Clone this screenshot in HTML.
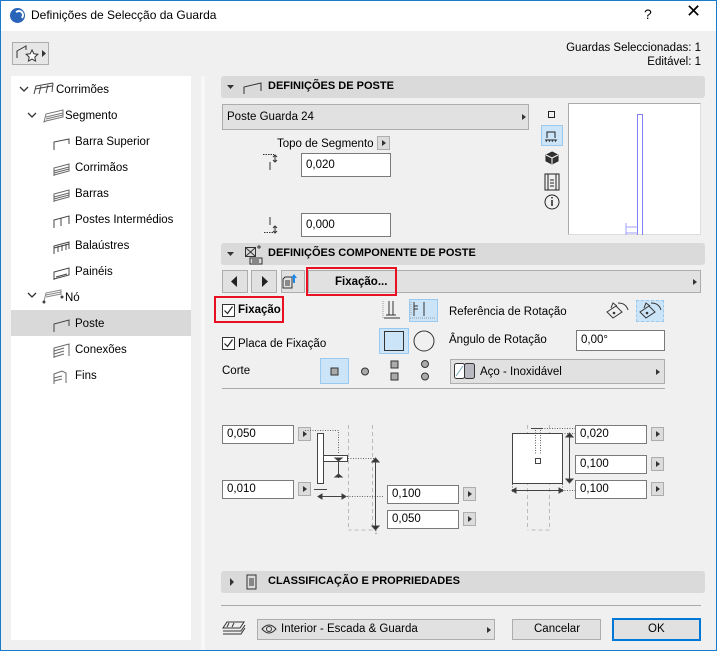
<!DOCTYPE html>
<html><head><meta charset="utf-8">
<style>
*{box-sizing:border-box;margin:0;padding:0}
body{width:717px;height:651px;overflow:hidden;background:#f0f0f0;font-family:"Liberation Sans",sans-serif;font-size:11.5px;color:#000;position:relative}
.a{position:absolute}
.t{position:absolute;white-space:nowrap;line-height:14px}
.hdr{position:absolute;left:221px;width:484px;height:22px;background:#dadada;border-radius:3px}
.hdr b{position:absolute;left:47px;top:4px;font-size:11px;white-space:nowrap}
.inp{position:absolute;background:#fff;border:1px solid #7a7a7a;padding-left:4px;line-height:17px;font-size:11.5px}
.btn{position:absolute;background:#e1e1e1;border:1px solid #adadad}
.sb{position:absolute;width:13px;height:14px;background:#dcdcdc;border:1px solid #adadad}
.sb:after,.arr:after{content:"";position:absolute;left:4px;top:3px;border-left:4px solid #333;border-top:3.5px solid transparent;border-bottom:3.5px solid transparent}
.arr{position:absolute;width:10px;height:12px}
.sel{position:absolute;background:#cce4f7;border:1px solid #99c9ef}
.cb{position:absolute;width:13px;height:13px;border:1px solid #333;background:#fff}
.red{position:absolute;border:2px solid #e81123}
</style></head><body>
<div class="a" style="left:0;top:0;width:717px;height:31px;background:#fff"></div>
<div class="a" style="left:10px;top:8px;width:15px;height:15px;border-radius:50%;background:#2a64b8"></div>
<div class="a" style="left:14px;top:10px;width:10px;height:10px;border-radius:50%;border:2px solid #fff;border-left-color:transparent;border-bottom-color:transparent"></div>
<div class="t" style="left:31px;top:8px;font-size:12px">Definições de Selecção da Guarda</div>
<div class="t" style="left:644px;top:7px;font-size:14px">?</div>
<div class="t" style="left:686px;top:4px;font-size:18px;font-weight:300">✕</div>
<div class="a" style="left:0;top:0;width:1px;height:651px;background:#1979ca"></div>
<div class="a" style="left:716px;top:0;width:1px;height:651px;background:#1979ca"></div>
<div class="a" style="left:0;top:650px;width:717px;height:1px;background:#1979ca"></div>
<div class="a" style="left:0;top:0;width:717px;height:1px;background:#1979ca"></div>

<div class="btn" style="left:12px;top:42px;width:37px;height:23px;background:#e6e6e6"></div>
<svg class="a" style="left:12px;top:42px" width="37" height="23"><path d="M5 16V9L14 4V8" fill="none" stroke="#333"/><path d="M20 8l1.8 3.8 4 .5-3 2.8.8 4-3.6-2-3.6 2 .8-4-3-2.8 4-.5z" fill="#fff" stroke="#333"/><path d="M30 8l4 3.5-4 3.5z" fill="#333"/></svg>

<div class="t" style="right:16px;top:41px">Guardas Seleccionadas: 1</div>
<div class="t" style="right:16px;top:55px">Editável: 1</div>

<div class="a" style="left:11px;top:76px;width:180px;height:564px;background:#fff"></div>
<div class="a" style="left:201px;top:76px;width:4px;height:574px;background:#f7f7f7"></div>
<div class="a" style="left:11px;top:310px;width:180px;height:26px;background:#d9d9d9"></div>
<svg class="a" style="left:11px;top:76px" width="180" height="320" fill="none" stroke="#444">
<path d="M9 11l4 4 4-4M17 37l4 4 4-4M17 217l4 4 4-4" stroke="#333" stroke-width="1.3"/>
<path d="M23 18l2-8 17-3M28 18l2-8M35 17l2-8M41 16l1-9M24 13l17-3"/>
<path d="M33 46l2-8 17-4v7l-17 4zM35 41l17-4M35 43l17-4" stroke="#777"/>
<path d="M43 74v-8l15-3v5" /><path d="M43 100v-8l15-4v7l-15 4zM43 97l15-4M43 95l15-4" stroke="#666"/>
<path d="M43 126v-8l15-4v7l-15 4zM43 123l15-4M43 121l15-4" stroke="#666"/>
<path d="M43 152v-8l15-4v8M50 150v-8"/>
<path d="M43 178v-8l15-4v7M43 172l15-4M47 176v-6M51 175v-6M55 174v-6"/>
<path d="M43 204v-8l15-4v7l-15 4zM45 201l11-3"/>
<path d="M33 225l2-8 15-3v5M35 221l15-3M35 219l15-3" stroke="#888"/><circle cx="33" cy="226" r="1" fill="#333"/><circle cx="51" cy="221" r="1" fill="#333"/>
<path d="M43 256v-8l15-4v6"/>
<path d="M43 282v-10l15-4v12M43 275l10-3M43 278l10-3M43 281l10-3" stroke="#666"/>
<path d="M43 308v-10l8-3 4 2v10M43 302l8-2M43 305l8-2" stroke="#666"/>
</svg>
<div class="t" style="left:56px;top:83px">Corrimões</div>
<div class="t" style="left:65px;top:109px">Segmento</div>
<div class="t" style="left:75px;top:135px">Barra Superior</div>
<div class="t" style="left:75px;top:161px">Corrimãos</div>
<div class="t" style="left:75px;top:187px">Barras</div>
<div class="t" style="left:75px;top:213px">Postes Intermédios</div>
<div class="t" style="left:75px;top:239px">Balaústres</div>
<div class="t" style="left:75px;top:265px">Painéis</div>
<div class="t" style="left:65px;top:291px">Nó</div>
<div class="t" style="left:75px;top:317px">Poste</div>
<div class="t" style="left:75px;top:343px">Conexões</div>
<div class="t" style="left:75px;top:369px">Fins</div>

<div class="hdr" style="top:76px"><b style="left:47px">DEFINIÇÕES DE POSTE</b></div>
<svg class="a" style="left:221px;top:76px" width="45" height="22" fill="none" stroke="#333"><path d="M6 9h7l-3.5 4z" fill="#333" stroke="none"/><path d="M23 18v-7l17-4v8"/></svg>
<div class="btn" style="left:222px;top:104px;width:307px;height:26px"></div>
<div class="t" style="left:227px;top:110px">Poste Guarda 24</div>
<div class="arr" style="left:518px;top:111px"></div>
<div class="sel" style="left:541px;top:125px;width:22px;height:21px"></div>
<svg class="a" style="left:540px;top:104px" width="25" height="110" fill="none" stroke="#222">
<rect x="8.5" y="7.5" width="6" height="6"/>
<path d="M7 34v-6h8v6M5 36h12" /><path d="M6 38l1-2M9 38l1-2M12 38l1-2M15 38l1-2" stroke-width=".8"/>
<path d="M12 48l6 3v6l-6 3-6-3v-6z" fill="#333"/><path d="M6 51l6 3 6-3M12 54v6" stroke="#fff"/>
<path d="M5 70h14v16H5zM8 70v16M16 70v16M10 76h4M10 79h4M10 82h4"/>
<circle cx="12" cy="98" r="7"/><path d="M12 96v6M12 93v1.5" stroke-width="1.5"/>
</svg>
<div class="a" style="left:568px;top:103px;width:133px;height:132px;background:#fff;border:1px solid #aaa;border-right-color:#ddd;border-bottom-color:#ddd"></div>
<svg class="a" style="left:568px;top:103px" width="133" height="132" fill="none" stroke="#8080ff"><rect x="69.5" y="11.5" width="5" height="124"/><path d="M58 120v12M58 124h12M58 130h12" stroke="#a0a0ff"/></svg>
<div class="t" style="left:277px;top:137px">Topo de Segmento</div>
<div class="sb" style="left:377px;top:136px"></div>
<svg class="a" style="left:262px;top:152px" width="20" height="90" fill="none" stroke="#333"><path d="M1 2.5h11" stroke-dasharray="1.5 1"/><path d="M8 10v8M13 3v7M11 5l2-2 2 2M11 8l2 2 2-2"/><path d="M8 65v8M1 80.5h11" /><path d="M1 80.5h11" stroke="#fff" stroke-dasharray="1 1.5"/><path d="M13 74v7M11 76l2-2 2 2M11 79l2 2 2-2"/></svg>
<div class="inp" style="left:301px;top:153px;width:90px;height:24px;line-height:22px">0,020</div>
<div class="inp" style="left:301px;top:213px;width:90px;height:24px;line-height:22px">0,000</div>

<div class="hdr" style="top:243px"><b>DEFINIÇÕES COMPONENTE DE POSTE</b></div>
<svg class="a" style="left:221px;top:243px" width="45" height="22" fill="none" stroke="#333"><path d="M6 9h7l-3.5 4z" fill="#333" stroke="none"/><rect x="24.5" y="4.5" width="10" height="9"/><path d="M25 5l9 8M34 5l-9 8M29 15h12v6H29zM31 17h7M31 19h7M36 4h4M38 2v4"/></svg>
<div class="btn" style="left:222px;top:270px;width:26px;height:23px"></div>
<div class="btn" style="left:251px;top:270px;width:26px;height:23px"></div>
<div class="btn" style="left:281px;top:270px;width:24px;height:23px"></div>
<div class="btn" style="left:308px;top:270px;width:393px;height:23px"></div>
<svg class="a" style="left:222px;top:270px" width="90" height="23" fill="#222"><path d="M15 6v11l-6-5.5z"/><path d="M40 6v11l6-5.5z"/><path d="M63 7h7v11h-9V9z" fill="none" stroke="#333"/><path d="M63 11h5M63 13h5M63 15h5" stroke="#333"/><path d="M72 4l-3 4h2v5h2V8h2z" fill="#1e88e5"/><path d="M99 6v4h3M99 8h3M104 5v13" fill="none" stroke="#444"/></svg>
<div class="t" style="left:335px;top:275px;font-weight:bold">Fixação...</div>
<div class="arr" style="left:689px;top:276px"></div>
<div class="red" style="left:306px;top:267px;width:91px;height:29px"></div>

<div class="cb" style="left:222px;top:304px"></div>
<svg class="a" style="left:222px;top:304px" width="13" height="13"><path d="M2.5 6.5l3 3 5-7" fill="none" stroke="#222" stroke-width="1.2"/></svg>
<div class="t" style="left:238px;top:303px;font-weight:bold">Fixação</div>
<div class="red" style="left:214px;top:296px;width:70px;height:27px"></div>

<div class="sel" style="left:409px;top:299px;width:29px;height:23px"></div>
<svg class="a" style="left:380px;top:298px" width="60" height="25" fill="none" stroke="#333"><path d="M9 3v14M13 3v14M6 17h10M4 20h16"/><path d="M3 3v17" stroke="#999" stroke-dasharray="1 1"/><path d="M34 4v14M44 4v14M34 8h4M34 11h4"/><path d="M31 4v14M30 20h26" stroke="#999" stroke-dasharray="1 1"/></svg>
<div class="t" style="left:449px;top:305px">Referência de Rotação</div>
<div class="sel" style="left:636px;top:300px;width:28px;height:22px;border-style:dashed"></div>
<svg class="a" style="left:604px;top:298px" width="62" height="26" fill="none" stroke="#333"><path d="M3 14l9-6 6 6-9 6zM7 10l2-5 4 3" /><circle cx="10" cy="15" r=".8" fill="#333"/><path d="M14 5q8 0 10 7" /><path d="M36 14l9-6 6 6-9 6zM40 10l2-5 4 3"/><circle cx="43" cy="15" r=".8" fill="#333"/><path d="M47 5q8 0 10 7"/></svg>

<div class="cb" style="left:222px;top:337px"></div>
<svg class="a" style="left:222px;top:337px" width="13" height="13"><path d="M2.5 6.5l3 3 5-7" fill="none" stroke="#222" stroke-width="1.2"/></svg>
<div class="t" style="left:238px;top:337px">Placa de Fixação</div>
<div class="sel" style="left:379px;top:328px;width:30px;height:26px"></div>
<svg class="a" style="left:379px;top:328px" width="60" height="26" fill="none" stroke="#333"><rect x="5.5" y="3.5" width="19" height="19"/><circle cx="45" cy="13" r="10"/></svg>
<div class="t" style="left:449px;top:333px">Ângulo de Rotação</div>
<div class="inp" style="left:576px;top:330px;width:89px;height:21px;line-height:19px">0,00°</div>

<div class="t" style="left:222px;top:364px">Corte</div>
<div class="sel" style="left:320px;top:358px;width:29px;height:26px"></div>
<svg class="a" style="left:320px;top:358px" width="120" height="28" fill="#aaa" stroke="#333"><rect x="11" y="10" width="7" height="7"/><circle cx="45" cy="13.5" r="3.5"/><rect x="71" y="3" width="7" height="7"/><rect x="71" y="15" width="7" height="7"/><circle cx="105" cy="6" r="3.5"/><circle cx="105" cy="18.5" r="3.5"/></svg>
<div class="btn" style="left:450px;top:359px;width:215px;height:25px"></div>
<svg class="a" style="left:453px;top:361px" width="26" height="20"><rect x="1.5" y="2.5" width="10" height="15" rx="2" fill="#fff" stroke="#333"/><rect x="11.5" y="2.5" width="10" height="15" rx="2" fill="#b8b8c0" stroke="#333"/><path d="M3 15l7-10" stroke="#7ab" /></svg>
<div class="t" style="left:480px;top:365px">Aço - Inoxidável</div>
<div class="arr" style="left:652px;top:366px"></div>
<div class="a" style="left:222px;top:388px;width:443px;height:1px;background:#aaa"></div>

<div class="inp" style="left:222px;top:425px;width:72px;height:19px">0,050</div>
<div class="sb" style="left:298px;top:427px"></div>
<div class="inp" style="left:222px;top:480px;width:72px;height:19px">0,010</div>
<div class="sb" style="left:298px;top:482px"></div>
<div class="inp" style="left:387px;top:485px;width:72px;height:19px">0,100</div>
<div class="sb" style="left:463px;top:487px"></div>
<div class="inp" style="left:387px;top:510px;width:72px;height:19px">0,050</div>
<div class="sb" style="left:463px;top:512px"></div>
<div class="inp" style="left:575px;top:425px;width:72px;height:19px">0,020</div>
<div class="sb" style="left:651px;top:427px"></div>
<div class="inp" style="left:575px;top:455px;width:72px;height:19px">0,100</div>
<div class="sb" style="left:651px;top:457px"></div>
<div class="inp" style="left:575px;top:480px;width:72px;height:19px">0,100</div>
<div class="sb" style="left:651px;top:482px"></div>
<svg class="a" style="left:300px;top:420px" width="380" height="115" fill="none" stroke="#444">
<g stroke="#bbb" stroke-dasharray="4 3"><path d="M48.5 5v105M72.5 5v105H48.5M227.5 5v105M249.5 5v105H227.5"/></g>
<rect x="17.5" y="13.5" width="6" height="50" fill="#fff"/>
<rect x="23.5" y="35.5" width="24" height="6" fill="#fff"/>
<g stroke-dasharray="1 1.5" stroke="#666"><path d="M5 10.5h33.5v24M48 38.5h28M47 76.5h36M76 108v8h10"/></g>
<path d="M38.5 38v20M35 38h7M35 57h7M75.5 40v68M18 76.5h28M14 69.5h13"/>
<path d="M72 42l3.5-4 3.5 4zM72 106l3.5 4 3.5-4zM35 38l3.5 3 3.5-3zM35 57l3.5-3 3.5 3zM22 74l-4 2.5 4 2.5zM42 74l4 2.5-4 2.5z" fill="#333"/>
<rect x="212.5" y="13.5" width="50" height="50" fill="#fff"/>
<rect x="235.5" y="38.5" width="5" height="5" fill="#fff"/>
<g stroke-dasharray="1 1.5" stroke="#666"><path d="M235.5 10v25M240.5 10v25M242 8.5h33M262 13.5h13M212.5 64v8M262.5 64v8M262 70.5h13"/></g>
<path d="M231 8.5h12M269.5 14v48M213 70.5h49"/>
<path d="M266 17l3.5-4 3.5 4zM266 59l3.5 4 3.5-4zM216 68l-4 2.5 4 2.5zM259 68l4 2.5-4 2.5z" fill="#333"/>
</svg>

<div class="hdr" style="top:571px"><b>CLASSIFICAÇÃO E PROPRIEDADES</b></div>
<svg class="a" style="left:221px;top:571px" width="45" height="22" fill="none" stroke="#333"><path d="M9 7v8l4-4z" fill="#333" stroke="none"/><path d="M26 4h9v14H26zM28 8h5M28 10h5M28 12h5M28 14h5"/></svg>
<div class="a" style="left:221px;top:605px;width:480px;height:1px;background:#aaa"></div>

<svg class="a" style="left:222px;top:618px" width="28" height="20" fill="none" stroke="#333"><path d="M5 4h17l-4 6H1zM1 13h18l4-6M1 16h18l4-6M7 5l-2 4M12 5l-2 4"/></svg>
<div class="btn" style="left:257px;top:619px;width:238px;height:21px"></div>
<svg class="a" style="left:261px;top:622px" width="18" height="14" fill="none" stroke="#333"><path d="M1 7q7-8 14 0q-7 8-14 0z"/><circle cx="8" cy="7" r="2.5"/></svg>
<div class="t" style="left:281px;top:622px">Interior - Escada &amp; Guarda</div>
<div class="arr" style="left:483px;top:624px"></div>
<div class="btn" style="left:512px;top:619px;width:89px;height:21px"></div>
<div class="t" style="left:534px;top:622px">Cancelar</div>
<div class="btn" style="left:612px;top:618px;width:89px;height:23px;border:2px solid #0078d7"></div>
<div class="t" style="left:648px;top:622px">OK</div>
</body></html>
